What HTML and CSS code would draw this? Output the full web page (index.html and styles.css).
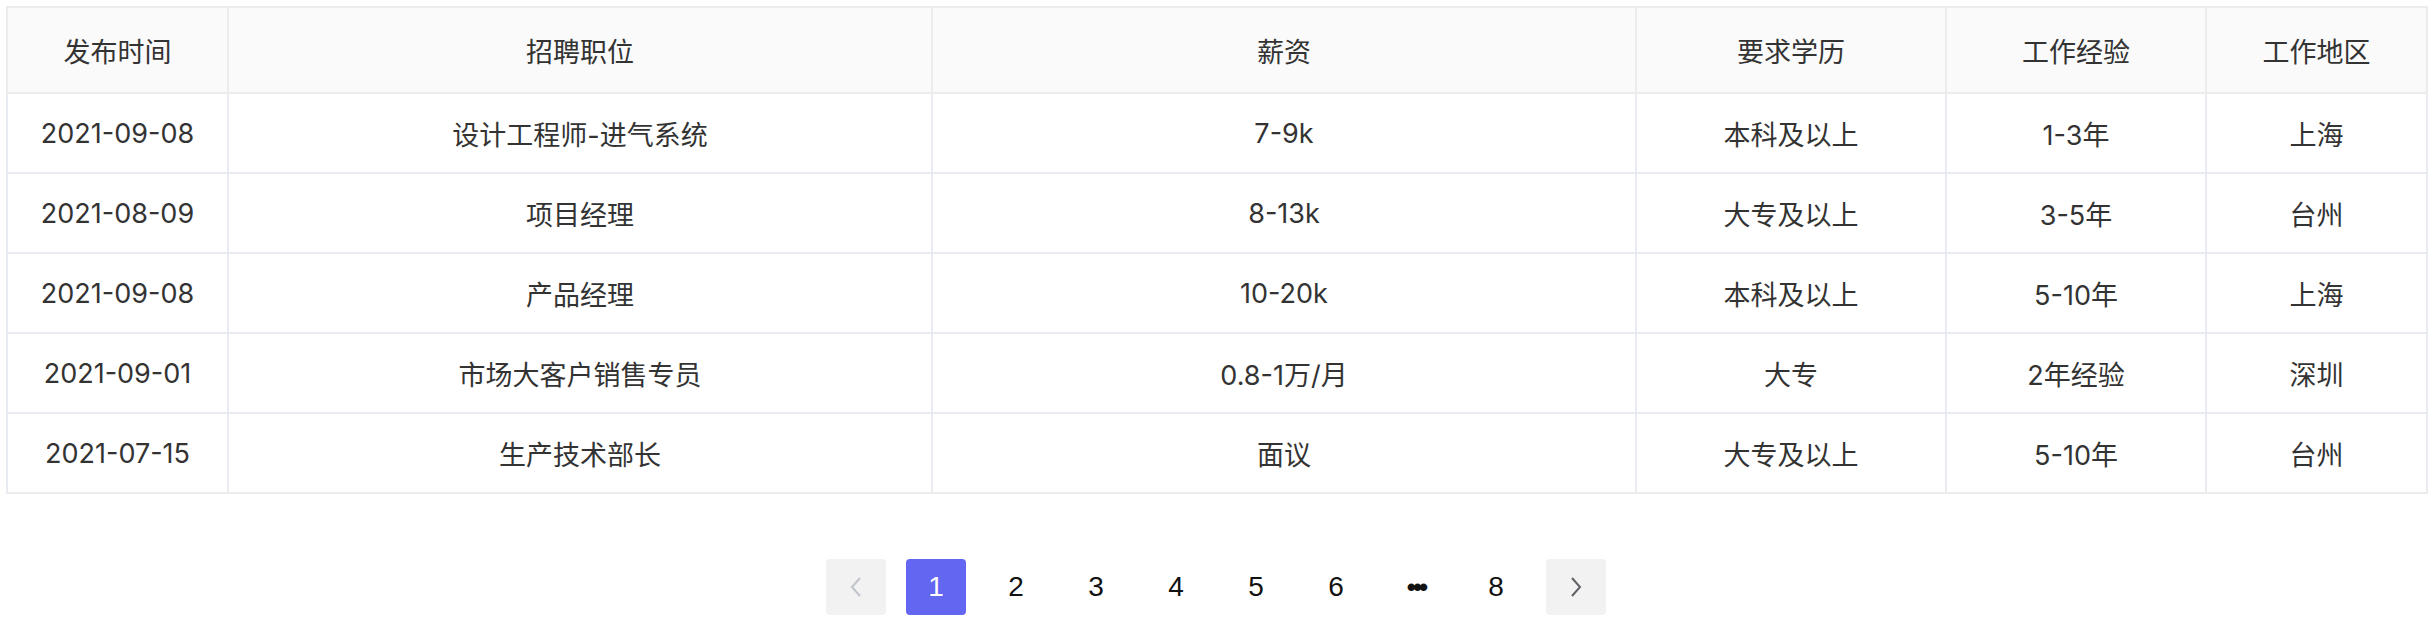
FILE: index.html
```html
<!DOCTYPE html>
<html lang="zh-CN">
<head>
    <meta charset="UTF-8">
    <meta name="viewport" content="width=device-width, initial-scale=1.0">
    <title>招聘信息</title>
    <link rel="stylesheet" href="styles.css">
</head>
<body>
    <div class="jobs">
        <table class="job-table">
            <colgroup>
                <col class="col-date">
                <col class="col-title">
                <col class="col-salary">
                <col class="col-edu">
                <col class="col-exp">
                <col class="col-area">
            </colgroup>
            <thead>
                <tr>
                    <th>发布时间</th>
                    <th>招聘职位</th>
                    <th>薪资</th>
                    <th>要求学历</th>
                    <th>工作经验</th>
                    <th>工作地区</th>
                </tr>
            </thead>
            <tbody>
                <tr>
                    <td>2021-09-08</td>
                    <td>设计工程师-进气系统</td>
                    <td>7-9k</td>
                    <td>本科及以上</td>
                    <td>1-3年</td>
                    <td>上海</td>
                </tr>
                <tr>
                    <td>2021-08-09</td>
                    <td>项目经理</td>
                    <td>8-13k</td>
                    <td>大专及以上</td>
                    <td>3-5年</td>
                    <td>台州</td>
                </tr>
                <tr>
                    <td>2021-09-08</td>
                    <td>产品经理</td>
                    <td>10-20k</td>
                    <td>本科及以上</td>
                    <td>5-10年</td>
                    <td>上海</td>
                </tr>
                <tr>
                    <td>2021-09-01</td>
                    <td>市场大客户销售专员</td>
                    <td>0.8-1万/月</td>
                    <td>大专</td>
                    <td>2年经验</td>
                    <td>深圳</td>
                </tr>
                <tr>
                    <td>2021-07-15</td>
                    <td>生产技术部长</td>
                    <td>面议</td>
                    <td>大专及以上</td>
                    <td>5-10年</td>
                    <td>台州</td>
                </tr>
            </tbody>
        </table>

        <ul class="pager">
            <li class="pager-btn pager-prev is-disabled">
                <svg width="14" height="24" viewBox="0 0 14 24"><path d="M11 3 L3 12 L11 21" fill="none" stroke="currentColor" stroke-width="2"/></svg>
            </li>
            <li class="pager-num is-active">1</li>
            <li class="pager-num">2</li>
            <li class="pager-num">3</li>
            <li class="pager-num">4</li>
            <li class="pager-num">5</li>
            <li class="pager-num">6</li>
            <li class="pager-num pager-more">•••</li>
            <li class="pager-num">8</li>
            <li class="pager-btn pager-next">
                <svg width="14" height="24" viewBox="0 0 14 24"><path d="M3 3 L11 12 L3 21" fill="none" stroke="currentColor" stroke-width="2"/></svg>
            </li>
        </ul>
    </div>
</body>
</html>
```

FILE: styles.css
```css
body {
    margin: 0;
    padding: 6px 2px 0 6px;
    font-family: Inter, "Noto Sans CJK SC", sans-serif;
    background: #fff;
    color: #333;
}

.jobs {
    width: 100%;
}

.job-table {
    width: 100%;
    table-layout: fixed;
    border-collapse: collapse;
    border: 2px solid #ececec;
    font-size: 27px;
}

.col-date { width: 221px; }
.col-title { width: 704px; }
.col-salary { width: 704px; }
.col-edu { width: 310px; }
.col-exp { width: 260px; }
.col-area { width: 221px; }

.job-table th {
    height: 84px;
    padding: 0;
    background: #fafafa;
    font-weight: normal;
    color: #333;
    border: 2px solid #ececec;
    text-align: center;
}

.job-table td {
    height: 78px;
    padding: 0;
    text-align: center;
    border: 2px solid #e9ebf2;
    color: #333;
}

.job-table tbody tr:last-child td {
    border-bottom-color: #ececec;
}

.pager {
    display: flex;
    justify-content: center;
    gap: 20px;
    list-style: none;
    margin: 65px 0 0;
    padding: 0;
}

.pager-btn,
.pager-num {
    width: 60px;
    height: 56px;
    display: flex;
    align-items: center;
    justify-content: center;
    border-radius: 4px;
    font-family: "Liberation Sans", Arial, sans-serif;
    font-size: 28px;
    color: #111;
}

.pager-btn {
    background: #f2f2f2;
    color: #606266;
}

.pager-btn.is-disabled {
    color: #c0c4cc;
}

.pager-num.is-active {
    background: #6366f1;
    color: #fff;
}

.pager-more {
    font-size: 26px;
    font-weight: bold;
    letter-spacing: -3px;
}
```
